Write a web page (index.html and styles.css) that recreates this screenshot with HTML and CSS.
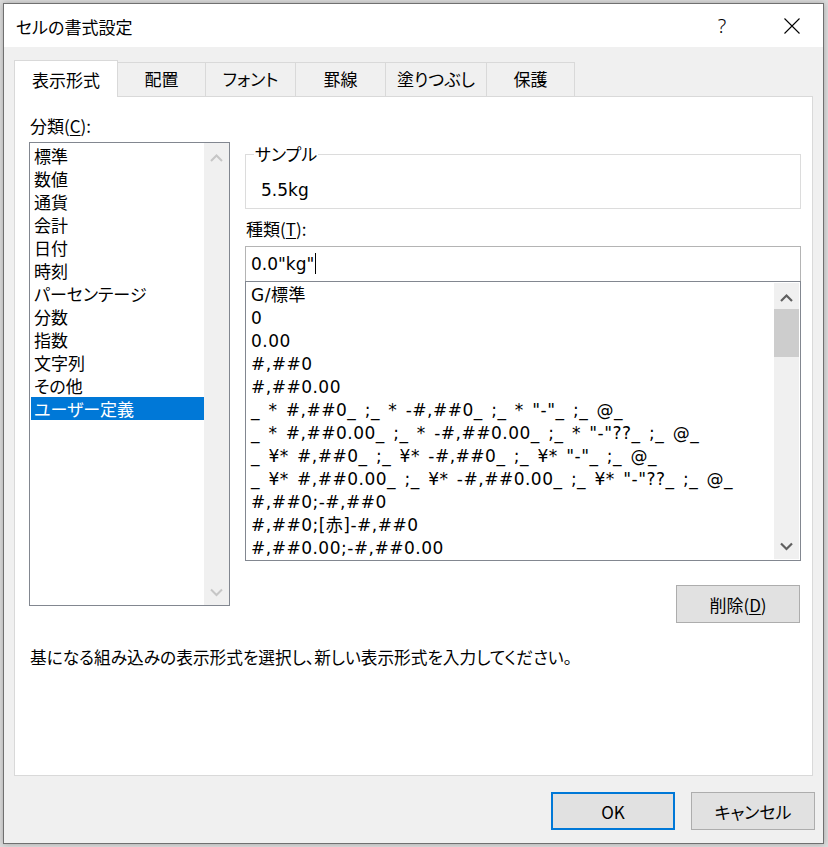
FILE: index.html
```html
<!DOCTYPE html>
<html lang="ja">
<head>
<meta charset="utf-8">
<title>セルの書式設定</title>
<link rel="stylesheet" href="styles.css">
</head>
<body>
<div class="dialog">
  <div class="titlebar">
    <span class="title">セルの書式設定</span>
    <span class="help">?</span>
    <span class="close"><svg width="16" height="16" viewBox="0 0 16 16"><path d="M0.5 0.5 L15.5 15.5 M15.5 0.5 L0.5 15.5" stroke="#000" stroke-width="1.1" fill="none"/></svg></span>
  </div>
  <div class="body">
    <div class="tabs">
      <div class="tab active">表示形式</div>
      <div class="tab w88">配置</div>
      <div class="tab w90">フォント</div>
      <div class="tab w90">罫線</div>
      <div class="tab w101">塗りつぶし</div>
      <div class="tab w88">保護</div>
    </div>
    <div class="panel">
      <div class="cols">
        <div class="leftcol">
          <div class="label">分類(<u>C</u>):</div>
          <div class="listbox cat">
            <div class="items">
              <div class="item">標準</div>
              <div class="item">数値</div>
              <div class="item">通貨</div>
              <div class="item">会計</div>
              <div class="item">日付</div>
              <div class="item">時刻</div>
              <div class="item">パーセンテージ</div>
              <div class="item">分数</div>
              <div class="item">指数</div>
              <div class="item">文字列</div>
              <div class="item">その他</div>
              <div class="item selected">ユーザー定義</div>
            </div>
            <div class="vscroll disabled">
              <div class="sbtn"><svg width="25" height="26" viewBox="0 0 25 26"><polyline points="7,18 12.5,12.5 18,18" fill="none" stroke="#c6c6c6" stroke-width="2"/></svg></div>
              <div class="strack"></div>
              <div class="sbtn"><svg width="25" height="26" viewBox="0 0 25 26"><polyline points="7,10.5 12.5,16 18,10.5" fill="none" stroke="#c6c6c6" stroke-width="2"/></svg></div>
            </div>
          </div>
        </div>
        <div class="rightcol">
          <fieldset class="sample">
            <legend>サンプル</legend>
            <div class="sample-value">5.5kg</div>
          </fieldset>
          <div class="label label2">種類(<u>T</u>):</div>
          <div class="input"><span class="input-text">0.0"kg"</span><span class="caret"></span></div>
          <div class="listbox fmt">
            <div class="items">
              <div class="item">G/標準</div>
              <div class="item">0</div>
              <div class="item">0.00</div>
              <div class="item">#,##0</div>
              <div class="item">#,##0.00</div>
              <div class="item">_ * #,##0_ ;_ * -#,##0_ ;_ * "-"_ ;_ @_</div>
              <div class="item">_ * #,##0.00_ ;_ * -#,##0.00_ ;_ * "-"??_ ;_ @_</div>
              <div class="item">_ ¥* #,##0_ ;_ ¥* -#,##0_ ;_ ¥* "-"_ ;_ @_</div>
              <div class="item">_ ¥* #,##0.00_ ;_ ¥* -#,##0.00_ ;_ ¥* "-"??_ ;_ @_</div>
              <div class="item">#,##0;-#,##0</div>
              <div class="item">#,##0;[赤]-#,##0</div>
              <div class="item">#,##0.00;-#,##0.00</div>
            </div>
            <div class="vscroll">
              <div class="sbtn"><svg width="25" height="26" viewBox="0 0 25 26"><polyline points="7,18 12.5,12.5 18,18" fill="none" stroke="#606060" stroke-width="2.2"/></svg></div>
              <div class="strack"><div class="thumb"></div></div>
              <div class="sbtn"><svg width="25" height="26" viewBox="0 0 25 26"><polyline points="7,10.5 12.5,16 18,10.5" fill="none" stroke="#606060" stroke-width="2.2"/></svg></div>
            </div>
          </div>
          <div class="delrow"><button class="btn">削除(<u>D</u>)</button></div>
        </div>
      </div>
      <div class="desc">基になる組み込みの表示形式を選択し、新しい表示形式を入力してください。</div>
    </div>
    <div class="footer">
      <button class="btn ok">OK</button>
      <button class="btn">キャンセル</button>
    </div>
  </div>
</div>
</body>
</html>
```

FILE: styles.css
```css
html, body {
  margin: 0;
  padding: 0;
}
body {
  width: 828px;
  height: 847px;
  overflow: hidden;
  background: #dcdcdc;
  font-family: "Noto Sans CJK JP", sans-serif;
  font-size: 17px;
  font-feature-settings: "palt";
  color: #000;
}
.dialog {
  margin: 3px 0 0 3px;
  width: 819px;
  height: 839px;
  border: 1px solid #707070;
  background: #f0f0f0;
  display: flex;
  flex-direction: column;
  box-shadow: 0 0 6px rgba(0,0,0,0.25);
}
.titlebar {
  height: 43px;
  flex: none;
  background: #fff;
  display: flex;
  align-items: center;
}
.title {
  flex: 1;
  padding-left: 12px;
  font-size: 17px;
  line-height: 24px;
  padding-top: 2px;
}
.help {
  width: 76px;
  text-align: center;
  font-size: 20px;
  font-weight: 300;
  line-height: 24px;
  font-family: "Noto Sans", sans-serif;
}
.close {
  width: 63px;
  height: 43px;
  display: flex;
  align-items: center;
  justify-content: center;
}
.body {
  flex: 1;
  padding: 13px 10px 0 10px;
}
.tabs {
  display: flex;
  align-items: flex-end;
  height: 37px;
  margin-bottom: -1px;
  position: relative;
  z-index: 1;
}
.tab {
  box-sizing: border-box;
  height: 34px;
  margin-bottom: 1px;
  border-top: 1px solid #d9d9d9;
  border-right: 1px solid #d9d9d9;
  background: #f0f0f0;
  text-align: center;
  line-height: 32px;
  font-size: 17px;
  white-space: nowrap;
}
.tab.active {
  width: 104px;
  height: 37px;
  margin-bottom: 0;
  border-left: 1px solid #d9d9d9;
  background: #fff;
  line-height: 37px;
}
.w88 { width: 88px; }
.w90 { width: 90px; }
.w101 { width: 101px; }
.panel {
  box-sizing: border-box;
  height: 680px;
  border: 1px solid #d9d9d9;
  background: #fff;
}
.cols {
  display: flex;
  gap: 15px;
  padding-left: 14px;
}
.leftcol {
  width: 201px;
  padding-top: 17px;
}
.rightcol {
  width: 556px;
  padding-top: 47px;
}
.label {
  line-height: 24px;
  height: 24px;
  margin-left: 1px;
  white-space: nowrap;
}
.label u, .btn u {
  text-underline-offset: 2px;
}
.listbox {
  box-sizing: border-box;
  border: 1px solid #828790;
  background: #fff;
  display: flex;
}
.listbox.cat {
  margin-top: 4px;
  height: 464px;
  padding: 1px 0 0 1px;
}
.listbox.cat .vscroll {
  margin-top: -1px;
}
.items {
  flex: 1;
  min-width: 0;
  overflow: hidden;
}
.item {
  height: 23px;
  line-height: 23px;
  padding-left: 3px;
  white-space: pre;
}
.item.selected {
  background: #0078d7;
  color: #fff;
}
.vscroll {
  width: 25px;
  flex: none;
  background: #f0f0f0;
  display: flex;
  flex-direction: column;
}
.sbtn {
  height: 26px;
  flex: none;
}
.sbtn svg {
  display: block;
}
.strack {
  flex: 1;
}
.thumb {
  height: 48px;
  background: #cdcdcd;
}
.sample {
  margin: 0;
  padding: 0 8px 6px 8px;
  border: 1px solid #dcdcdc;
  min-width: 0;
}
.sample legend {
  padding: 0 1px;
  line-height: 20px;
  font-size: 17px;
}
.sample-value {
  margin: 14px 0 0 7px;
  line-height: 24px;
  font-family: "DejaVu Sans", "Noto Sans CJK JP", sans-serif;
  font-size: 17px;
}
.label2 {
  margin-top: 8px;
}
.input {
  margin-top: 5px;
  box-sizing: border-box;
  height: 35px;
  border: 1px solid #b4b4b4;
  border-bottom: none;
  background: #fff;
  display: flex;
  align-items: center;
  padding: 0 0 1px 5px;
  font-family: "DejaVu Sans", "Noto Sans CJK JP", sans-serif;
  font-size: 17px;
}
.caret {
  width: 1px;
  height: 21px;
  background: #000;
  margin-left: 1px;
}
.listbox.fmt {
  height: 280px;
  padding: 1px;
}
.fmt .item {
  box-sizing: border-box;
  height: 23px;
  padding-top: 2px;
  line-height: 21px;
  font-family: "DejaVu Sans", "Noto Sans CJK JP", sans-serif;
  font-size: 17px;
  padding-left: 4px;
  letter-spacing: 0.5px;
  word-spacing: 2.5px;
}
.delrow {
  margin-top: 24px;
  display: flex;
  justify-content: flex-end;
  padding-right: 1px;
}
.btn {
  box-sizing: border-box;
  width: 124px;
  height: 38px;
  background: #e1e1e1;
  border: 1px solid #adadad;
  border-radius: 0;
  padding: 0;
  font-family: "Noto Sans CJK JP", sans-serif;
  font-feature-settings: "palt";
  font-size: 17px;
  color: #000;
}
.btn.ok {
  border: 2px solid #0078d7;
}
.desc {
  margin-top: 22px;
  padding-left: 15px;
  line-height: 24px;
  font-size: 16.7px;
  white-space: nowrap;
}
.footer {
  margin-top: 16px;
  margin-right: -2px;
  display: flex;
  justify-content: flex-end;
  gap: 16px;
}
```
